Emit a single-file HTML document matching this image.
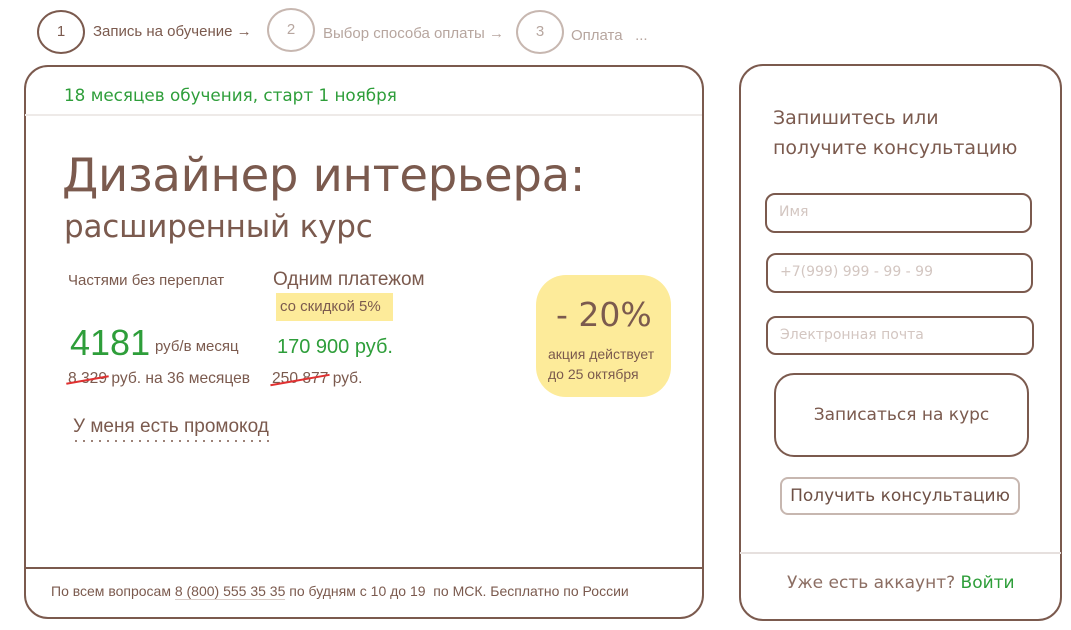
<!DOCTYPE html>
<html><head><meta charset="utf-8"><style>
*{margin:0;padding:0;box-sizing:border-box}
body{width:1071px;height:630px;background:#fff;position:relative;overflow:hidden;font-family:"Liberation Sans","DejaVu Sans",sans-serif;color:#7b5a4e}
.a{position:absolute;white-space:nowrap}
.circ{position:absolute;border-radius:50%;border:2px solid #7b5a4e;width:48px;height:44px;text-align:center;line-height:40px;font-size:15px}
.card{position:absolute;border:2px solid #7b5a4e;border-radius:24px}
.g{color:#2e9e3a}
.inp{position:absolute;border:2px solid #7b5a4e;border-radius:10px;font-size:14px;color:#d3c6c1;padding-left:12px;line-height:35px;font-family:"DejaVu Sans",sans-serif}
.strike{position:relative}
.strike:after{content:"";position:absolute;left:-2px;right:-2px;top:50%;height:2px;background:#e03030;transform:rotate(-10deg)}
</style></head><body>
<div class="circ" style="left:37px;top:10px">1</div>
<div class="a" style="left:93px;top:23px;font-size:15px">Запись на обучение →</div>
<div class="circ" style="left:267px;top:8px;border-color:#c7b7b0;color:#b7a69f">2</div>
<div class="a" style="left:323px;top:25px;font-size:15px;color:#b7a69f">Выбор способа оплаты →</div>
<div class="circ" style="left:516px;top:10px;border-color:#c7b7b0;color:#b7a69f">3</div>
<div class="a" style="left:571px;top:27px;font-size:15px;color:#b7a69f">Оплата &nbsp; ...</div>

<div class="card" style="left:24px;top:65px;width:680px;height:554px"></div>
<div class="a" style="left:25px;top:114px;width:677px;height:2px;background:#eeeae8"></div>
<div class="a" style="left:25px;top:567px;width:677px;height:2px;background:#7b5a4e"></div>
<div class="a g" style="left:64px;top:85px;font-size:16.8px;font-family:'DejaVu Sans',sans-serif">18 месяцев обучения, старт 1 ноября</div>
<div class="a" style="left:62px;top:148px;font-size:46.5px;font-family:'DejaVu Sans',sans-serif;letter-spacing:-0.3px">Дизайнер интерьера:</div>
<div class="a" style="left:64px;top:209px;font-size:31px;font-family:'DejaVu Sans',sans-serif;letter-spacing:-0.2px">расширенный курс</div>
<div class="a" style="left:68px;top:272px;font-size:15px">Частями без переплат</div>
<div class="a" style="left:273px;top:269px;font-size:19px">Одним платежом</div>
<div class="a" style="left:276px;top:293px;width:117px;height:28px;background:#fdeb9a;font-size:15px;line-height:28px;padding-left:4px">со скидкой 5%</div>
<div class="a g" style="left:70px;top:322px;font-size:36px">4181</div>
<div class="a" style="left:155px;top:338px;font-size:15px">руб/в месяц</div>
<div class="a g" style="left:277px;top:336px;font-size:20px">170 900 руб.</div>
<div class="a" style="left:68px;top:370px;font-size:15.6px"><span class="strike">8 329</span> руб. на 36 месяцев</div>
<div class="a" style="left:272px;top:370px;font-size:15.6px"><span class="strike">250 877</span> руб.</div>
<div class="a" style="left:73px;top:416px;font-size:19px">У меня есть промокод</div>
<div class="a" style="left:72px;top:440px;width:202px;height:2px;background:radial-gradient(circle,#8c6e63 0.9px,transparent 1.2px) 0 0/8px 2px repeat-x"></div>
<div class="a" style="left:536px;top:275px;width:135px;height:122px;background:#fdeb9a;border-radius:30px"></div>
<div class="a" style="left:556px;top:295px;font-size:33px;font-family:'DejaVu Sans',sans-serif">- 20%</div>
<div class="a" style="left:548px;top:344px;font-size:14px;line-height:20px">акция действует<br>до 25 октября</div>
<div class="a" style="left:51px;top:583px;font-size:14px">По всем вопросам <span style="border-bottom:1px solid #d9cdc8">8 (800) 555 35 35</span> по будням с 10 до 19 &nbsp;по МСК. Бесплатно по России</div>

<div class="card" style="left:739px;top:64px;width:323px;height:557px"></div>
<div class="a" style="left:740px;top:552px;width:321px;height:2px;background:#e6e0de"></div>
<div class="a" style="left:773px;top:103px;font-size:19px;line-height:30px;font-family:'DejaVu Sans',sans-serif">Запишитесь или<br>получите консультацию</div>
<div class="inp" style="left:765px;top:193px;width:267px;height:40px">Имя</div>
<div class="inp" style="left:766px;top:253px;width:267px;height:40px">+7(999) 999 - 99 - 99</div>
<div class="inp" style="left:766px;top:316px;width:268px;height:39px">Электронная почта</div>
<div class="a" style="left:774px;top:373px;width:255px;height:84px;border:2px solid #7b5a4e;border-radius:20px;text-align:center;line-height:80px;font-size:17px;font-family:'DejaVu Sans',sans-serif">Записаться на курс</div>
<div class="a" style="left:780px;top:477px;width:240px;height:38px;border:2px solid #c7b7b0;border-radius:8px;text-align:center;line-height:34px;font-size:17px;font-family:'DejaVu Sans',sans-serif;color:#6e5045">Получить консультацию</div>
<div class="a" style="left:787px;top:573px;font-size:17px;font-family:'DejaVu Sans',sans-serif;color:#8c6e63">Уже есть аккаунт? <span class="g">Войти</span></div>
</body></html>
